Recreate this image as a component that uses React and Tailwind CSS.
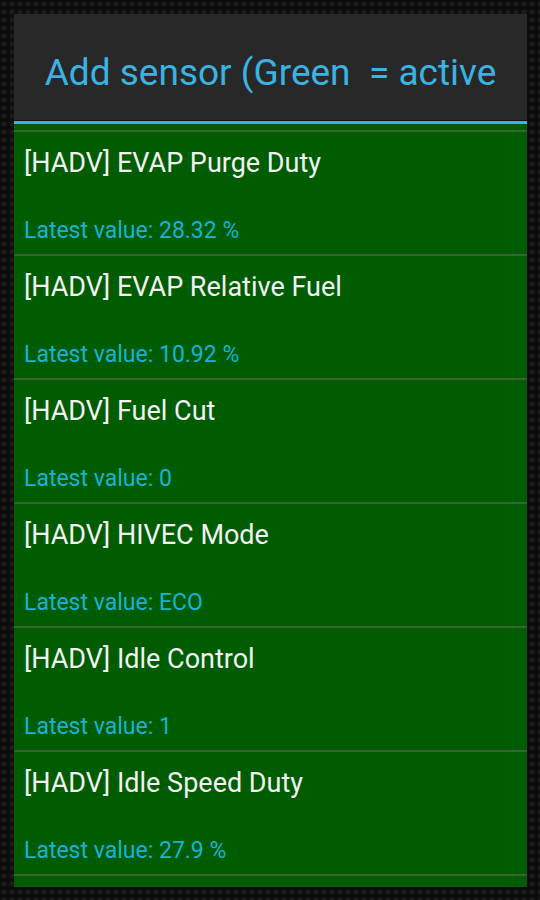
const sensors = [
  { name: '[HADV] EVAP Purge Duty', value: '28.32 %' },
  { name: '[HADV] EVAP Relative Fuel', value: '10.92 %' },
  { name: '[HADV] Fuel Cut', value: '0' },
  { name: '[HADV] HIVEC Mode', value: 'ECO' },
  { name: '[HADV] Idle Control', value: '1' },
  { name: '[HADV] Idle Speed Duty', value: '27.9 %' },
]

export default function App() {
  return (
    <div className="w-[540px] h-[900px] overflow-hidden bg-[#0c0c0c] bg-[radial-gradient(circle,#1c1c1c_0,#1c1c1c_2px,transparent_3px)] bg-[length:8px_8px] px-[14px] pt-[14px] font-['Roboto',sans-serif]">
      <div className="w-[513px] h-[873px] flex flex-col overflow-hidden">
        <div className="h-[107px] shrink-0 bg-[#282828] border-b border-[#111] flex items-center justify-center overflow-hidden pt-[10px]">
          <span className="text-[37px] leading-none text-[#3ab3e3] whitespace-pre">Add sensor (Green  = active</span>
        </div>
        <div className="h-[3px] shrink-0 bg-[#33b5e5]" />
        <div className="flex-1 bg-[#005c00] pt-[6px]">
          {sensors.map((s) => (
            <div key={s.name} className="border-t-2 border-[#3b613b] h-[124px] px-[10px] pt-[14px]">
              <div className="text-[27px] leading-[34px] text-[#f2f2f2]">{s.name}</div>
              <div className="mt-[36px] text-[23px] leading-[30px] text-[#1ab0d8]">Latest value: {s.value}</div>
            </div>
          ))}
          <div className="border-t-2 border-[#3b613b]" />
        </div>
      </div>
    </div>
  )
}
